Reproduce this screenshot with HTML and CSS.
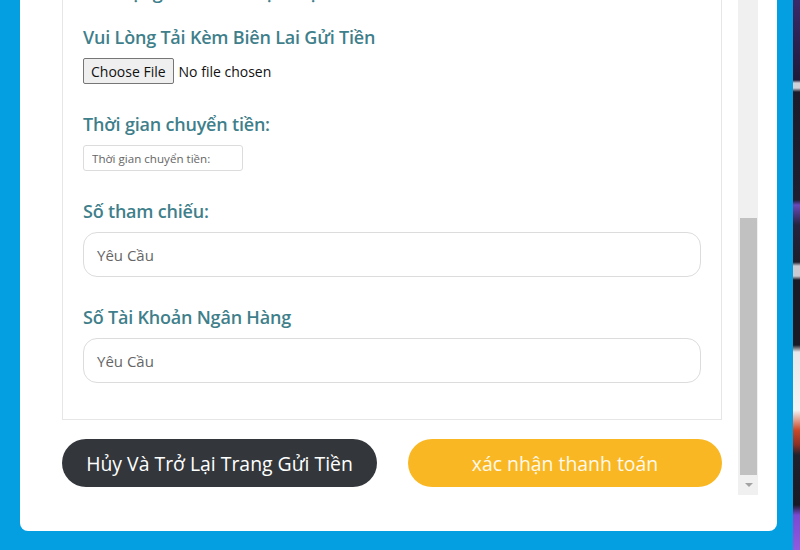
FILE: index.html
```html
<!DOCTYPE html>
<html lang="vi">
<head>
<meta charset="utf-8">
<title>Xác nhận thanh toán</title>
<link rel="stylesheet" href="styles.css">
</head>
<body>
<div class="screen">
  <div class="modal">
    <div class="modal-body">
      <div class="scroll-content">
        <div class="panel">
          <div class="field field-cut">
            <label class="label">Số Lượng Tiền Gửi Thực Hiện</label>
          </div>
          <div class="field">
            <label class="label">Vui Lòng Tải Kèm Biên Lai Gửi Tiền</label>
            <div class="file-row">
              <span class="file-btn">Choose File</span>
              <span class="file-text">No file chosen</span>
            </div>
          </div>
          <div class="field">
            <label class="label">Thời gian chuyển tiền:</label>
            <input class="input-small" type="text" placeholder="Thời gian chuyển tiền:">
          </div>
          <div class="field">
            <label class="label">Số tham chiếu:</label>
            <input class="input-large" type="text" placeholder="Yêu Cầu">
          </div>
          <div class="field field-last">
            <label class="label">Số Tài Khoản Ngân Hàng</label>
            <input class="input-large" type="text" placeholder="Yêu Cầu">
          </div>
        </div>
        <div class="actions">
          <button class="btn btn-dark" type="button">Hủy Và Trở Lại Trang Gửi Tiền</button>
          <button class="btn btn-yellow" type="button">xác nhận thanh toán</button>
        </div>
      </div>
      <div class="scrollbar">
        <div class="track"></div>
        <div class="thumb"></div>
        <div class="arrow"><span class="arrow-tri"></span></div>
      </div>
    </div>
  </div>
  <div class="side-blue"></div>
  <div class="side-image"></div>
</div>
</body>
</html>
```

FILE: styles.css
```css
* { box-sizing: border-box; }

html, body {
  margin: 0;
  padding: 0;
  width: 800px;
  height: 550px;
  overflow: hidden;
  background: #049fe0;
  font-family: "Open Sans", "Noto Sans", sans-serif;
}

.screen {
  display: flex;
  width: 800px;
  height: 550px;
  padding-left: 20px;
}

.modal {
  width: 757px;
  height: 531px;
  background: #ffffff;
  border-radius: 0 0 8px 8px;
  padding-right: 19px;
  flex-shrink: 0;
}

.modal-body {
  display: flex;
  height: 495px;
}

.scroll-content {
  width: 718px;
  height: 495px;
  overflow: hidden;
  padding: 0 16px 0 42px;
}

.panel {
  border: 1px solid #e6e6e6;
  border-top: none;
  padding: 0 20px 36px 20px;
  margin-top: -20px;
}

.field {
  display: flex;
  flex-direction: column;
  align-items: flex-start;
  margin-bottom: 28px;
}

.field-cut {
  margin-bottom: 21px;
}

.field-last {
  margin-bottom: 0;
}

.label {
  font-size: 18px;
  line-height: 24px;
  font-weight: 600;
  color: #3f7f8b;
  margin-bottom: 9px;
  letter-spacing: -0.2px;
}

.field-cut .label {
  margin-bottom: 0;
}

.file-row {
  display: flex;
  align-items: center;
  height: 26px;
}

.file-btn {
  display: inline-flex;
  align-items: center;
  height: 26px;
  padding: 0 7px;
  background: #efefef;
  border: 1px solid #767676;
  border-radius: 2px;
  font-size: 14px;
  color: #111;
}

.file-text {
  font-size: 14px;
  color: #111;
  margin-left: 5px;
}

.input-small {
  width: 160px;
  height: 26px;
  border: 1px solid #dcdcdc;
  border-radius: 3px;
  padding: 0 8px;
  font-family: inherit;
  font-size: 11.6px;
  color: #555;
  outline: none;
}

.input-small::placeholder { color: #666; }

.input-large {
  width: 100%;
  height: 45px;
  border: 1px solid #dcdcdc;
  border-radius: 14px;
  padding: 0 13px;
  font-family: inherit;
  font-size: 15px;
  color: #555;
  outline: none;
}

.input-large::placeholder { color: #666; }

.actions {
  display: grid;
  grid-template-columns: 315px 314px;
  justify-content: space-between;
  margin-top: 19px;
}

.btn {
  height: 48px;
  border: none;
  border-radius: 24px;
  font-family: inherit;
  font-size: 19.4px;
  color: #ffffff;
  padding: 0;
}

.btn-dark { background: #33373c; }
.btn-yellow { background: #f9b823; color: #fff9ea; }

.scrollbar {
  width: 20px;
  height: 495px;
  display: flex;
  flex-direction: column;
  background: #f0f0f0;
  padding: 0 1px 0 2px;
}

.track {
  height: 218px;
}

.thumb {
  height: 257px;
  background: #c1c1c1;
}

.arrow {
  flex: 1;
  display: flex;
  align-items: center;
  justify-content: center;
}

.arrow-tri {
  width: 0;
  height: 0;
  border-left: 4px solid transparent;
  border-right: 4px solid transparent;
  border-top: 4px solid #a3a3a3;
}

.side-blue {
  width: 16px;
  flex-shrink: 0;
}

.side-image {
  flex: 1;
  background: linear-gradient(to bottom,
    #3a2a6a 0, #1f1a3a 80px, #cfd0d8 83px, #cfd0d8 88px, #1c1b2b 92px,
    #1e1e30 200px, #6a4ab8 205px, #26223e 225px, #1d1d2b 262px,
    #c9cad2 266px, #c9cad2 276px, #1a1a26 280px, #1a1a26 345px,
    #e8e8ea 352px, #f4f4f4 410px, #c94a2a 430px, #8a3024 445px,
    #20202c 455px, #1a1a26 505px, #7a4ad0 515px, #8e5ae0 550px);
}
```
